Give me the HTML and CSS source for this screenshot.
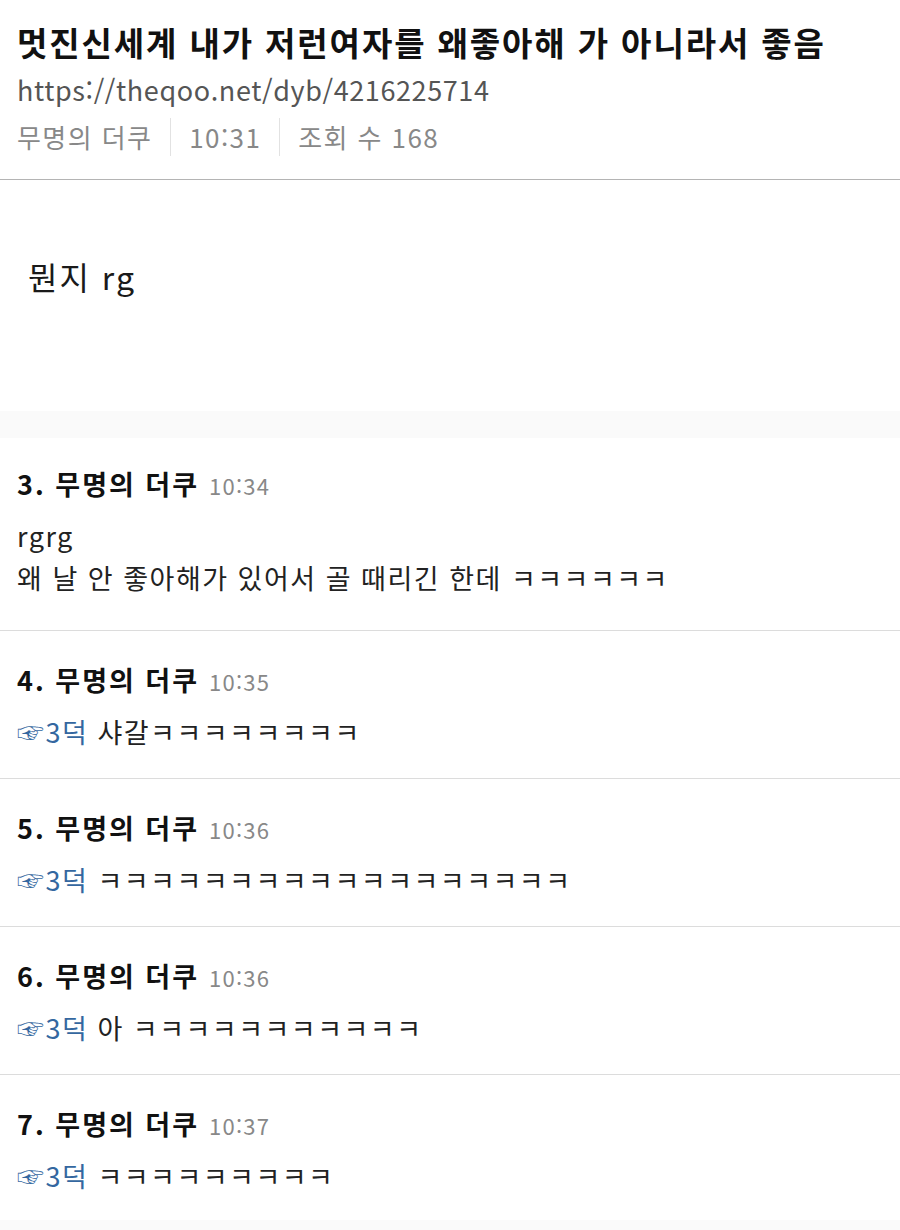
FILE: index.html
```html
<!DOCTYPE html>
<html lang="ko">
<head>
<meta charset="utf-8">
<title>멋진신세계 내가 저런여자를 왜좋아해 가 아니라서 좋음</title>
<link rel="stylesheet" href="styles.css">
</head>
<body>
<article class="post">
  <header class="post-head">
    <h1 class="post-title">멋진신세계 내가 저런여자를 왜좋아해 가 아니라서 좋음</h1>
    <div class="post-url">https://theqoo.net/dyb/4216225714</div>
    <div class="post-meta">
      <span class="meta-item">무명의 더쿠</span>
      <span class="meta-item">10:31</span>
      <span class="meta-item">조회 수 168</span>
    </div>
  </header>
  <div class="post-body">뭔지 rg</div>
</article>

<div class="band"></div>

<ul class="comments">
  <li class="comment first">
    <div class="comment-head"><b class="author">3. 무명의 더쿠</b><span class="time">10:34</span></div>
    <div class="comment-text">rgrg<br>왜 날 안 좋아해가 있어서 골 때리긴 한데 ㅋㅋㅋㅋㅋㅋ</div>
  </li>
  <li class="comment">
    <div class="comment-head"><b class="author">4. 무명의 더쿠</b><span class="time">10:35</span></div>
    <div class="comment-text"><a class="reply-to">☞3덕</a> 샤갈ㅋㅋㅋㅋㅋㅋㅋㅋ</div>
  </li>
  <li class="comment">
    <div class="comment-head"><b class="author">5. 무명의 더쿠</b><span class="time">10:36</span></div>
    <div class="comment-text"><a class="reply-to">☞3덕</a> ㅋㅋㅋㅋㅋㅋㅋㅋㅋㅋㅋㅋㅋㅋㅋㅋㅋㅋ</div>
  </li>
  <li class="comment">
    <div class="comment-head"><b class="author">6. 무명의 더쿠</b><span class="time">10:36</span></div>
    <div class="comment-text"><a class="reply-to">☞3덕</a> 아 ㅋㅋㅋㅋㅋㅋㅋㅋㅋㅋㅋ</div>
  </li>
  <li class="comment last">
    <div class="comment-head"><b class="author">7. 무명의 더쿠</b><span class="time">10:37</span></div>
    <div class="comment-text"><a class="reply-to">☞3덕</a> ㅋㅋㅋㅋㅋㅋㅋㅋㅋ</div>
  </li>
</ul>

<div class="band band-bottom"></div>
</body>
</html>
```

FILE: styles.css
```css
html, body {
  margin: 0;
  padding: 0;
  background: #fff;
}

body {
  font-family: "Noto Sans CJK KR", "Noto Sans", sans-serif;
  color: #222;
}

/* post header */
.post-head {
  padding: 20px 17px 23px;
  border-bottom: 1px solid #b4b4b4;
}

.post-title {
  margin: 0;
  font-size: 33px;
  line-height: 44px;
  font-weight: 700;
  color: #111;
  letter-spacing: 1.9px;
}

.post-url {
  margin-top: 7px;
  font-size: 27px;
  line-height: 38px;
  color: #555;
  letter-spacing: 0.6px;
}

.post-meta {
  display: flex;
  align-items: center;
  margin-top: 9px;
  font-size: 26px;
  line-height: 38px;
  color: #888;
  letter-spacing: 1.4px;
}

.meta-item + .meta-item {
  margin-left: 18px;
  padding-left: 18px;
  border-left: 1px solid #e2e2e2;
}

.post-body {
  padding: 74px 28px 113px;
  font-size: 32px;
  line-height: 44px;
  color: #1a1a1a;
  letter-spacing: 2px;
}

.band {
  height: 27px;
  background: #fafafa;
}

.band-bottom {
  height: 12px;
}

/* comments */
.comments {
  list-style: none;
  margin: 0;
  padding: 0;
}

.comment {
  padding: 32px 17px 25px;
  border-bottom: 1px solid #dcdcdc;
}

.comment.first {
  padding-top: 29px;
  padding-bottom: 31px;
}

.comment.last {
  border-bottom: 0;
  padding-bottom: 23px;
}

.comment-head {
  display: flex;
  align-items: baseline;
  gap: 10px;
  height: 34px;
  line-height: 34px;
}

.author {
  font-size: 27px;
  font-weight: 700;
  color: #111;
  letter-spacing: 2px;
}

.time {
  font-size: 22px;
  color: #888;
  letter-spacing: 1.2px;
}

.comment-text {
  margin-top: 14px;
  font-size: 27px;
  line-height: 42px;
  color: #222;
  letter-spacing: 1.5px;
}

.reply-to {
  color: #3467a0;
  text-decoration: none;
  line-height: 1;
}
```
